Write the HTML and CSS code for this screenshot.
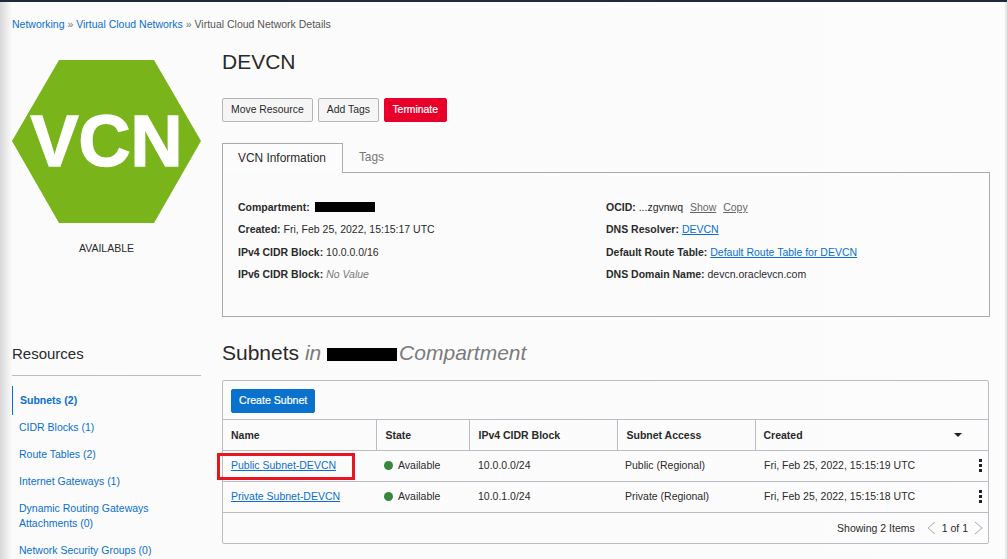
FILE: index.html
```html
<!DOCTYPE html>
<html lang="en">
  <head>
    <meta charset="UTF-8">
    <meta name="viewport" content="width=device-width, initial-scale=1.0">
    <title>Virtual Cloud Network Details</title>
    <link rel="stylesheet" href="styles.css">
  </head>
  <body>
    <div class="topbar"></div>
    <div class="page">
      <div class="crumbs">
        <a href="#">Networking</a> <span class="sep">»</span>
        <a href="#">Virtual Cloud Networks</a> <span class="sep">»</span>
        Virtual Cloud Network Details
      </div>

      <div class="columns">
        <!-- Left column: status hexagon and resource links -->
        <aside class="side">
          <svg class="hex" width="189" height="163" viewBox="0 0 189 163">
            <polygon points="47,0 142,0 189,81 142,163 47,163 0,81" fill="#78b41a"/>
            <text x="94.5" y="106" text-anchor="middle" class="hex-text">VCN</text>
          </svg>
          <div class="status">AVAILABLE</div>

          <h2 class="res-title">Resources</h2>
          <ul class="res-list">
            <li class="active"><a href="#">Subnets (2)</a></li>
            <li><a href="#">CIDR Blocks (1)</a></li>
            <li><a href="#">Route Tables (2)</a></li>
            <li><a href="#">Internet Gateways (1)</a></li>
            <li><a href="#">Dynamic Routing Gateways Attachments (0)</a></li>
            <li><a href="#">Network Security Groups (0)</a></li>
          </ul>
        </aside>

        <main class="main">
          <h1 class="title">DEVCN</h1>
          <div class="actions">
            <button type="button" class="btn">Move Resource</button>
            <button type="button" class="btn">Add Tags</button>
            <button type="button" class="btn btn-danger">Terminate</button>
          </div>

          <div class="tabs">
            <div class="tab tab-on">VCN Information</div>
            <div class="tab">Tags</div>
          </div>
          <div class="info">
            <div class="info-col">
              <div class="info-row"><b>Compartment:</b> <span class="redact redact-small"></span></div>
              <div class="info-row"><b>Created:</b> Fri, Feb 25, 2022, 15:15:17 UTC</div>
              <div class="info-row"><b>IPv4 CIDR Block:</b> 10.0.0.0/16</div>
              <div class="info-row"><b>IPv6 CIDR Block:</b> <i class="muted">No Value</i></div>
            </div>
            <div class="info-col">
              <div class="info-row"><b>OCID:</b> ...zgvnwq <a href="#" class="grey-link">Show</a> <a href="#" class="grey-link">Copy</a></div>
              <div class="info-row"><b>DNS Resolver:</b> <a href="#">DEVCN</a></div>
              <div class="info-row"><b>Default Route Table:</b> <a href="#">Default Route Table for DEVCN</a></div>
              <div class="info-row"><b>DNS Domain Name:</b> devcn.oraclevcn.com</div>
            </div>
          </div>

          <h2 class="sub-title">Subnets <i>in</i> <span class="redact redact-big"></span><i class="sub-comp">Compartment</i></h2>

          <div class="card">
            <div class="toolbar">
              <button type="button" class="btn btn-primary">Create Subnet</button>
            </div>
            <table class="grid">
              <colgroup>
                <col class="c-name"><col class="c-state"><col class="c-cidr"><col class="c-access"><col>
              </colgroup>
              <thead>
                <tr>
                  <th>Name</th>
                  <th>State</th>
                  <th>IPv4 CIDR Block</th>
                  <th>Subnet Access</th>
                  <th><div class="sort-cell">Created <span class="caret"></span></div></th>
                </tr>
              </thead>
              <tbody>
                <tr>
                  <td><a href="#" class="marked">Public Subnet-DEVCN</a></td>
                  <td><span class="dot"></span>Available</td>
                  <td>10.0.0.0/24</td>
                  <td>Public (Regional)</td>
                  <td><div class="date-cell">Fri, Feb 25, 2022, 15:15:19 UTC <span class="kebab"><i></i><i></i><i></i></span></div></td>
                </tr>
                <tr>
                  <td><a href="#">Private Subnet-DEVCN</a></td>
                  <td><span class="dot"></span>Available</td>
                  <td>10.0.1.0/24</td>
                  <td>Private (Regional)</td>
                  <td><div class="date-cell">Fri, Feb 25, 2022, 15:15:18 UTC <span class="kebab"><i></i><i></i><i></i></span></div></td>
                </tr>
              </tbody>
            </table>
            <div class="pager">
              <span>Showing 2 Items</span>
              <svg width="10" height="14" viewBox="0 0 10 14" class="pg-prev"><path d="M8 1 L1 7 L8 13" fill="none" stroke="#a9a9a9"/></svg>
              <span>1 of 1</span>
              <svg width="10" height="14" viewBox="0 0 10 14"><path d="M2 1 L9 7 L2 13" fill="none" stroke="#a9a9a9"/></svg>
            </div>
          </div>
        </main>
      </div>
    </div>
  </body>
</html>
```

FILE: styles.css
```css
html, body {
    margin: 0;
    height: 559px;
    overflow: hidden;
}
body {
    font-family: "Liberation Sans", Arial, sans-serif;
    font-size: 10.5px;
    color: #2a2a2a;
    background: linear-gradient(to right, #d8d8d8 0, #fbfbfb 12px, #fcfcfc 1005px, #e9e9e9 1005px);
}
a {
    color: #0a6fcf;
}
.topbar {
    height: 2px;
    background: #1e2a38;
}
.page {
    padding: 16px 17px 0 12px;
}
.crumbs {
    font-size: 10.5px;
    line-height: 13px;
    color: #555;
}
.crumbs a {
    text-decoration: none;
}
.sep {
    color: #777;
}
.columns {
    display: grid;
    grid-template-columns: 189px 768px;
    column-gap: 21px;
    margin-top: 18px;
}

/* left column */
.hex {
    display: block;
    margin-top: 11px;
}
.hex-text {
    font-family: "Liberation Sans", Arial, sans-serif;
    font-weight: bold;
    font-size: 72px;
    fill: #fff;
    stroke: #fff;
    stroke-width: 1.5px;
}
.status {
    text-align: center;
    font-size: 10.5px;
    line-height: 13px;
    margin-top: 19px;
}
.res-title {
    font-size: 15px;
    font-weight: normal;
    line-height: 18px;
    margin: 90px 0 0;
    padding-bottom: 12px;
    border-bottom: 1px solid #b9bcc2;
}
.res-list {
    list-style: none;
    margin: 10px 0 0;
    padding: 0;
}
.res-list li {
    padding: 7px 7px;
    line-height: 15px;
    font-size: 10.5px;
    margin-bottom: -2px;
    color: #0a6fcf;
}
.res-list a {
    text-decoration: none;
}
.res-list .active {
    border-left: 1px solid #0a6fcf;
    font-weight: bold;
}

/* main column */
.title {
    font-size: 21px;
    font-weight: normal;
    line-height: 26px;
    margin: 0;
}
.actions {
    display: flex;
    gap: 5px;
    margin-top: 23px;
}
.btn {
    font-family: inherit;
    font-size: 10.4px;
    height: 24px;
    padding: 0 8px 2px;
    background: #f5f5f5;
    border: 1px solid #b5b5b5;
    border-radius: 2px;
    color: #2a2a2a;
}
.btn-danger {
    background: #e8002b;
    border-color: #e8002b;
    color: #fff;
    padding: 0 7.5px 2px;
    -webkit-text-stroke: 0.2px #fff;
}
.btn-primary {
    background: #0a72cc;
    border-color: #0a72cc;
    color: #fff;
    font-size: 10.6px;
    padding: 0 7px 2px;
    -webkit-text-stroke: 0.2px #fff;
}
.tabs {
    display: flex;
    margin-top: 21px;
    height: 29px;
}
.tab {
    font-size: 11.9px;
    padding: 7px 16px 0;
    color: #777;
    flex: none;
}
.tab-on {
    color: #2a2a2a;
    border: 1px solid #aaa;
    border-bottom: none;
    height: 30px;
    box-sizing: border-box;
    padding-left: 15px;
    padding-top: 7px;
    background: #fcfcfc;
    position: relative;
    z-index: 1;
}
.info {
    display: grid;
    grid-template-columns: 368px 1fr;
    border: 1px solid #aaa;
    height: 145px;
    box-sizing: border-box;
    padding: 28px 15px 0;
}
.info-row {
    line-height: 13px;
    height: 22.4px;
}
.muted {
    color: #777;
}
.grey-link {
    color: #666;
    margin-left: 4px;
}
.redact {
    display: inline-block;
    background: #000;
}
.redact-small {
    width: 60px;
    height: 10px;
    margin-left: 2px;
    vertical-align: -1px;
}
.redact-big {
    width: 70px;
    height: 13px;
    vertical-align: -1px;
}
.sub-title {
    font-size: 21px;
    font-weight: normal;
    line-height: 24px;
    margin: 24px 0 0;
}
.sub-title i {
    color: #7b7b7b;
}
.sub-comp {
    margin-left: 2px;
}
.card {
    border: 1px solid #b9bcc2;
    border-radius: 2px;
    margin-top: 15px;
    margin-right: 1px;
}
.toolbar {
    padding: 8px;
    height: 22px;
}
.grid {
    width: 100%;
    border-collapse: collapse;
    table-layout: fixed;
}
.c-name { width: 153px; }
.c-state { width: 93px; }
.c-cidr { width: 148px; }
.c-access { width: 138px; }
.grid th, .grid td {
    height: 30px;
    padding: 0 8px;
    text-align: left;
    border-top: 1px solid #b9bcc2;
    font-size: 10.5px;
}
.grid td {
    height: 28px;
    padding-bottom: 2px;
}
.grid th + th {
    border-left: 1px solid #b9bcc2;
    padding-left: 9px;
}
.grid th:last-child {
    padding-left: 8px;
}
.grid td:nth-child(3), .grid td:last-child {
    padding-left: 9px;
}
.sort-cell, .date-cell {
    display: flex;
    justify-content: space-between;
    align-items: center;
}
.caret {
    width: 0;
    height: 0;
    border: 4px solid transparent;
    border-top-color: #222;
    border-bottom: 0;
    margin-right: 18px;
}
.marked {
    position: relative;
}
.marked::after {
    content: "";
    position: absolute;
    left: -14px;
    top: -6px;
    width: 138px;
    height: 27px;
    border: 3px solid #e8141f;
    box-sizing: border-box;
}
.dot {
    display: inline-block;
    width: 9px;
    height: 9px;
    border-radius: 50%;
    background: #37873d;
    margin-right: 5px;
    vertical-align: -1px;
}
.kebab {
    display: flex;
    flex-direction: column;
    gap: 2px;
    margin-right: -2px;
}
.kebab i {
    display: block;
    width: 3px;
    height: 3px;
    background: #222;
}
.pager {
    display: flex;
    justify-content: flex-end;
    align-items: center;
    gap: 5px;
    height: 30px;
    padding-right: 5px;
    border-top: 1px solid #b9bcc2;
    font-size: 10.5px;
}
.pg-prev {
    margin-left: 7px;
}
```
